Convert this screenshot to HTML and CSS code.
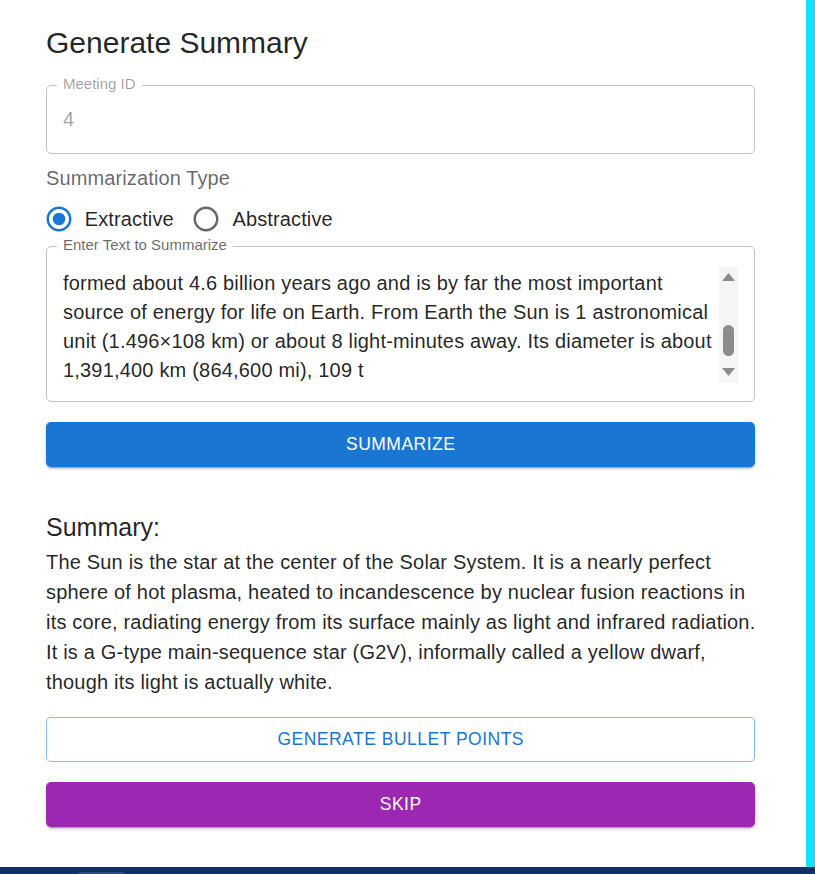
FILE: index.html
```html
<!DOCTYPE html>
<html lang="en">
<head>
<meta charset="utf-8">
<title>Generate Summary</title>
<link rel="stylesheet" href="styles.css">
</head>
<body>
<div class="screen">
  <main class="page">
    <h1 class="title">Generate Summary</h1>

    <div class="outlined field-id">
      <span class="legend legend-disabled">Meeting ID</span>
      <span class="value-disabled">4</span>
    </div>

    <div class="form-label">Summarization Type</div>
    <div class="radio-group">
      <label class="radio-item">
        <span class="radio-icon radio-checked">
          <svg viewBox="0 0 24 24" width="30" height="30"><path d="M12 2C6.48 2 2 6.480 2 12s4.48 10 10 10 10-4.48 10-10S17.52 2 12 2zm0 18c-4.42 0-8-3.58-8-8s3.58-8 8-8 8 3.58 8 8-3.58 8-8 8z"/><circle cx="12" cy="12" r="5"/></svg>
        </span>
        <span class="radio-text">Extractive</span>
      </label>
      <label class="radio-item">
        <span class="radio-icon radio-unchecked">
          <svg viewBox="0 0 24 24" width="30" height="30"><path d="M12 2C6.48 2 2 6.48 2 12s4.48 10 10 10 10-4.48 10-10S17.52 2 12 2zm0 18c-4.42 0-8-3.58-8-8s3.58-8 8-8 8 3.58 8 8-3.58 8-8 8z"/></svg>
        </span>
        <span class="radio-text">Abstractive</span>
      </label>
    </div>

    <div class="outlined field-text">
      <span class="legend">Enter Text to Summarize</span>
      <div class="text-body">
        <div class="text-lines">
          <span class="text-line">formed about 4.6 billion years ago and is by far the most important</span>
          <span class="text-line">source of energy for life on Earth. From Earth the Sun is 1 astronomical</span>
          <span class="text-line">unit (1.496×108 km) or about 8 light-minutes away. Its diameter is about</span>
          <span class="text-line">1,391,400 km (864,600 mi), 109 t</span>
        </div>
        <div class="scrollbar">
          <span class="sb-arrow sb-up"><svg width="13" height="8" viewBox="0 0 13 8"><polygon points="6.5,0 13,8 0,8"/></svg></span>
          <span class="sb-thumb"></span>
          <span class="sb-arrow sb-down"><svg width="13" height="8" viewBox="0 0 13 8"><polygon points="0,0 13,0 6.5,8"/></svg></span>
        </div>
      </div>
    </div>

    <button class="btn btn-contained btn-primary">Summarize</button>

    <h2 class="summary-title">Summary:</h2>
    <p class="summary-text">
      <span class="summary-line">The Sun is the star at the center of the Solar System. It is a nearly perfect</span>
      <span class="summary-line">sphere of hot plasma, heated to incandescence by nuclear fusion reactions in</span>
      <span class="summary-line">its core, radiating energy from its surface mainly as light and infrared radiation.</span>
      <span class="summary-line">It is a G-type main-sequence star (G2V), informally called a yellow dwarf,</span>
      <span class="summary-line">though its light is actually white.</span>
    </p>

    <button class="btn btn-outlined">Generate Bullet Points</button>
    <button class="btn btn-contained btn-secondary">Skip</button>
  </main>
  <div class="accent"></div>
</div>
<footer class="taskbar"><span class="task-item"></span></footer>
</body>
</html>
```

FILE: styles.css
```css
html, body {
  margin: 0;
  padding: 0;
}

body {
  width: 815px;
  height: 874px;
  overflow: hidden;
  font-family: "Liberation Sans", Arial, Helvetica, sans-serif;
  color: rgba(0, 0, 0, 0.87);
  background: #ffffff;
}

.screen {
  display: flex;
  height: 867px;
}

.page {
  flex: 1;
  box-sizing: border-box;
  padding: 23px 51px 0 46px;
  background: #ffffff;
  display: flex;
  flex-direction: column;
}

.accent {
  width: 9px;
  background: #12e0ff;
}

.taskbar {
  height: 7px;
  background: #0e3267;
  display: flex;
  align-items: flex-end;
  padding-left: 79px;
  box-sizing: border-box;
}

.task-item {
  width: 46px;
  height: 2px;
  background: #2b4c78;
  border-radius: 2px 2px 0 0;
}

.title {
  margin: 0 0 22px;
  font-size: 30px;
  line-height: 40px;
  font-weight: 400;
  color: rgba(0, 0, 0, 0.87);
}

.outlined {
  position: relative;
  box-sizing: border-box;
  border: 1px solid #c4c4c4;
  border-radius: 5px;
}

.legend {
  position: absolute;
  left: 10px;
  top: -11px;
  padding: 0 6px;
  background: #ffffff;
  font-size: 15px;
  line-height: 18px;
  color: rgba(0, 0, 0, 0.6);
  white-space: nowrap;
}

.legend-disabled {
  color: rgba(0, 0, 0, 0.38);
}

.field-id {
  height: 69px;
  display: flex;
  align-items: center;
  padding-left: 16px;
}

.value-disabled {
  font-size: 20px;
  line-height: 28.75px;
  color: rgba(0, 0, 0, 0.38);
}

.form-label {
  margin-top: 10px;
  font-size: 20px;
  line-height: 28.75px;
  letter-spacing: 0.12px;
  color: rgba(0, 0, 0, 0.6);
}

.radio-group {
  display: flex;
}

.radio-item {
  display: inline-flex;
  align-items: center;
  margin-left: -13.75px;
  margin-right: 20px;
  cursor: pointer;
}

.radio-icon {
  display: flex;
  padding: 11.25px;
}

.radio-checked svg {
  fill: #1976d2;
}

.radio-unchecked svg {
  fill: rgba(0, 0, 0, 0.6);
}

.radio-text {
  font-size: 20px;
  line-height: 30px;
  letter-spacing: 0.12px;
  color: rgba(0, 0, 0, 0.87);
}

.field-text {
  margin-top: 1px;
  padding: 21px 16px 18px 16px;
}

.text-body {
  display: flex;
  height: 115px;
}

.text-lines {
  flex: 1;
  display: flex;
  flex-direction: column;
  padding-top: 1px;
  font-size: 20px;
  line-height: 28.75px;
  letter-spacing: 0.19px;
  color: rgba(0, 0, 0, 0.87);
}

.text-line {
  white-space: nowrap;
}

.scrollbar {
  width: 19px;
  margin-top: -1px;
  background: #f5f5f5;
  display: flex;
  flex-direction: column;
  align-items: center;
}

.sb-arrow {
  display: flex;
  align-items: center;
  justify-content: center;
  width: 19px;
}

.sb-arrow svg {
  fill: #8c8c8c;
}

.sb-up {
  height: 20px;
}

.sb-down {
  height: 23px;
  margin-top: auto;
}

.sb-thumb {
  margin-top: 38px;
  width: 11px;
  height: 31px;
  border-radius: 6px;
  background: #8c8c8c;
}

.btn {
  display: block;
  width: 100%;
  height: 45px;
  box-sizing: border-box;
  border-radius: 5px;
  font-family: "Liberation Sans", Arial, Helvetica, sans-serif;
  font-size: 17.5px;
  font-weight: 400;
  letter-spacing: 0.5px;
  text-transform: uppercase;
  cursor: pointer;
  padding: 0;
}

.btn-contained {
  border: none;
  color: #ffffff;
  box-shadow: 0 3px 1px -2px rgba(0, 0, 0, 0.2), 0 2px 2px 0 rgba(0, 0, 0, 0.14), 0 1px 5px 0 rgba(0, 0, 0, 0.12);
}

.btn-primary {
  margin-top: 20px;
  background: #1976d2;
}

.btn-secondary {
  margin-top: 20px;
  background: #9c27b0;
}

.btn-outlined {
  margin-top: 20px;
  background: #ffffff;
  border: 1px solid rgba(25, 118, 210, 0.5);
  color: #1976d2;
}

.summary-title {
  margin: 40px 0 0;
  font-size: 25px;
  line-height: 40px;
  font-weight: 400;
  color: rgba(0, 0, 0, 0.87);
}

.summary-text {
  margin: 0;
  display: flex;
  flex-direction: column;
  font-size: 20px;
  line-height: 30px;
  letter-spacing: 0.19px;
  color: rgba(0, 0, 0, 0.87);
}

.summary-line {
  white-space: nowrap;
}
```
